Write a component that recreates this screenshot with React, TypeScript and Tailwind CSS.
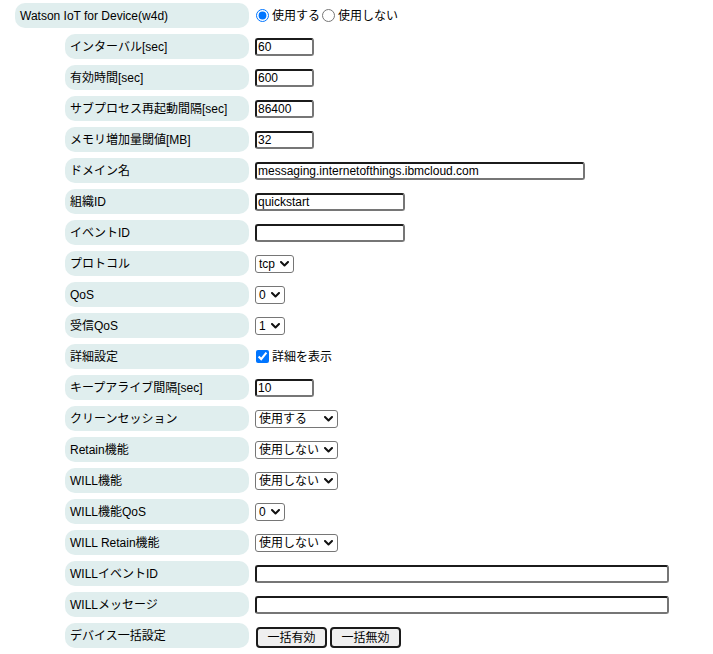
import React from "react";

type Field =
  | { kind: "text"; value: string; width: string }
  | { kind: "select"; value: string; width: string }
  | { kind: "radio" }
  | { kind: "check" }
  | { kind: "buttons" };

const rows: { label: string; field: Field }[] = [
  { label: "インターバル[sec]", field: { kind: "text", value: "60", width: "w-[59px]" } },
  { label: "有効時間[sec]", field: { kind: "text", value: "600", width: "w-[59px]" } },
  { label: "サブプロセス再起動間隔[sec]", field: { kind: "text", value: "86400", width: "w-[59px]" } },
  { label: "メモリ増加量閾値[MB]", field: { kind: "text", value: "32", width: "w-[59px]" } },
  {
    label: "ドメイン名",
    field: { kind: "text", value: "messaging.internetofthings.ibmcloud.com", width: "w-[330px]" },
  },
  { label: "組織ID", field: { kind: "text", value: "quickstart", width: "w-[150px]" } },
  { label: "イベントID", field: { kind: "text", value: "", width: "w-[150px]" } },
  { label: "プロトコル", field: { kind: "select", value: "tcp", width: "w-[39px]" } },
  { label: "QoS", field: { kind: "select", value: "0", width: "w-[30px]" } },
  { label: "受信QoS", field: { kind: "select", value: "1", width: "w-[30px]" } },
  { label: "詳細設定", field: { kind: "check" } },
  { label: "キープアライブ間隔[sec]", field: { kind: "text", value: "10", width: "w-[59px]" } },
  { label: "クリーンセッション", field: { kind: "select", value: "使用する", width: "w-[83px]" } },
  { label: "Retain機能", field: { kind: "select", value: "使用しない", width: "w-[83px]" } },
  { label: "WILL機能", field: { kind: "select", value: "使用しない", width: "w-[83px]" } },
  { label: "WILL機能QoS", field: { kind: "select", value: "0", width: "w-[30px]" } },
  { label: "WILL Retain機能", field: { kind: "select", value: "使用しない", width: "w-[83px]" } },
  { label: "WILLイベントID", field: { kind: "text", value: "", width: "w-[414px]" } },
  { label: "WILLメッセージ", field: { kind: "text", value: "", width: "w-[414px]" } },
  { label: "デバイス一括設定", field: { kind: "buttons" } },
];

function Chevron() {
  return (
    <svg width="9" height="6" viewBox="0 0 9 6" fill="none" className="shrink-0">
      <path d="M1 1l3.5 3.5L8 1" stroke="#111" strokeWidth="2" strokeLinecap="round" strokeLinejoin="round" />
    </svg>
  );
}

function TextBox({ value, width }: { value: string; width: string }) {
  return (
    <input
      type="text"
      defaultValue={value}
      className={`${width} h-[18px] px-[1px] text-[12px] leading-[14px] text-black bg-white rounded-[3px] border-2 border-t-[#1b1b1b] border-l-[#1b1b1b] border-r-[#767676] border-b-[#767676] outline-none`}
    />
  );
}

function Select({ value, width }: { value: string; width: string }) {
  return (
    <div
      className={`${width} h-[18px] flex items-center justify-between pl-[3px] pr-[4px] border border-[#767676] rounded-[3px] bg-white text-[12px] leading-none text-black`}
    >
      <span className="whitespace-nowrap">{value}</span>
      <Chevron />
    </div>
  );
}

function Btn({ children }: { children: React.ReactNode }) {
  return (
    <button className="w-[71px] h-[21px] bg-[#efefef] border-2 border-[#1b1b1b] rounded-[4px] text-[12px] text-black leading-none">
      {children}
    </button>
  );
}

function FieldCell({ field }: { field: Field }) {
  switch (field.kind) {
    case "text":
      return <TextBox value={field.value} width={field.width} />;
    case "select":
      return <Select value={field.value} width={field.width} />;
    case "check":
      return (
        <label className="flex items-center gap-[3px] text-[12px] text-black">
          <input type="checkbox" defaultChecked className="w-[13px] h-[13px] m-0 ml-[1px] accent-[#0075ff]" />
          <span>詳細を表示</span>
        </label>
      );
    case "buttons":
      return (
        <div className="flex items-center gap-[3px] pt-[4px] pl-[1px]">
          <Btn>一括有効</Btn>
          <Btn>一括無効</Btn>
        </div>
      );
    default:
      return null;
  }
}

export default function App() {
  return (
    <div
      className="w-[713px] h-[654px] bg-white overflow-hidden pt-[3px]"
      style={{ fontFamily: '"Liberation Sans", "Noto Sans CJK JP", Arial, sans-serif' }}
    >
      <div className="flex flex-col gap-[6px]">
        {/* Top row */}
        <div className="flex items-center h-[25px]">
          <div className="ml-[15px] w-[234px] h-[25px] rounded-[10px] bg-[#e0eeee] flex items-center pl-[5px] text-[12px] text-black">
            Watson IoT for Device(w4d)
          </div>
          <div className="ml-[6px] flex items-center text-[12px] text-black">
            <input type="radio" name="w4d" defaultChecked className="w-[13px] h-[13px] m-0 ml-[1px] accent-[#0075ff]" />
            <span className="ml-[3px]">使用する</span>
            <input type="radio" name="w4d" className="w-[13px] h-[13px] m-0 ml-[2px]" />
            <span className="ml-[3px]">使用しない</span>
          </div>
        </div>

        {rows.map((r) => (
          <div key={r.label} className="flex items-center h-[25px]">
            <div className="ml-[65px] w-[184px] h-[25px] rounded-[10px] bg-[#e0eeee] flex items-center pl-[5px] text-[12px] text-black whitespace-nowrap">
              {r.label}
            </div>
            <div className="ml-[6px] flex items-center">
              <FieldCell field={r.field} />
            </div>
          </div>
        ))}
      </div>
    </div>
  );
}
